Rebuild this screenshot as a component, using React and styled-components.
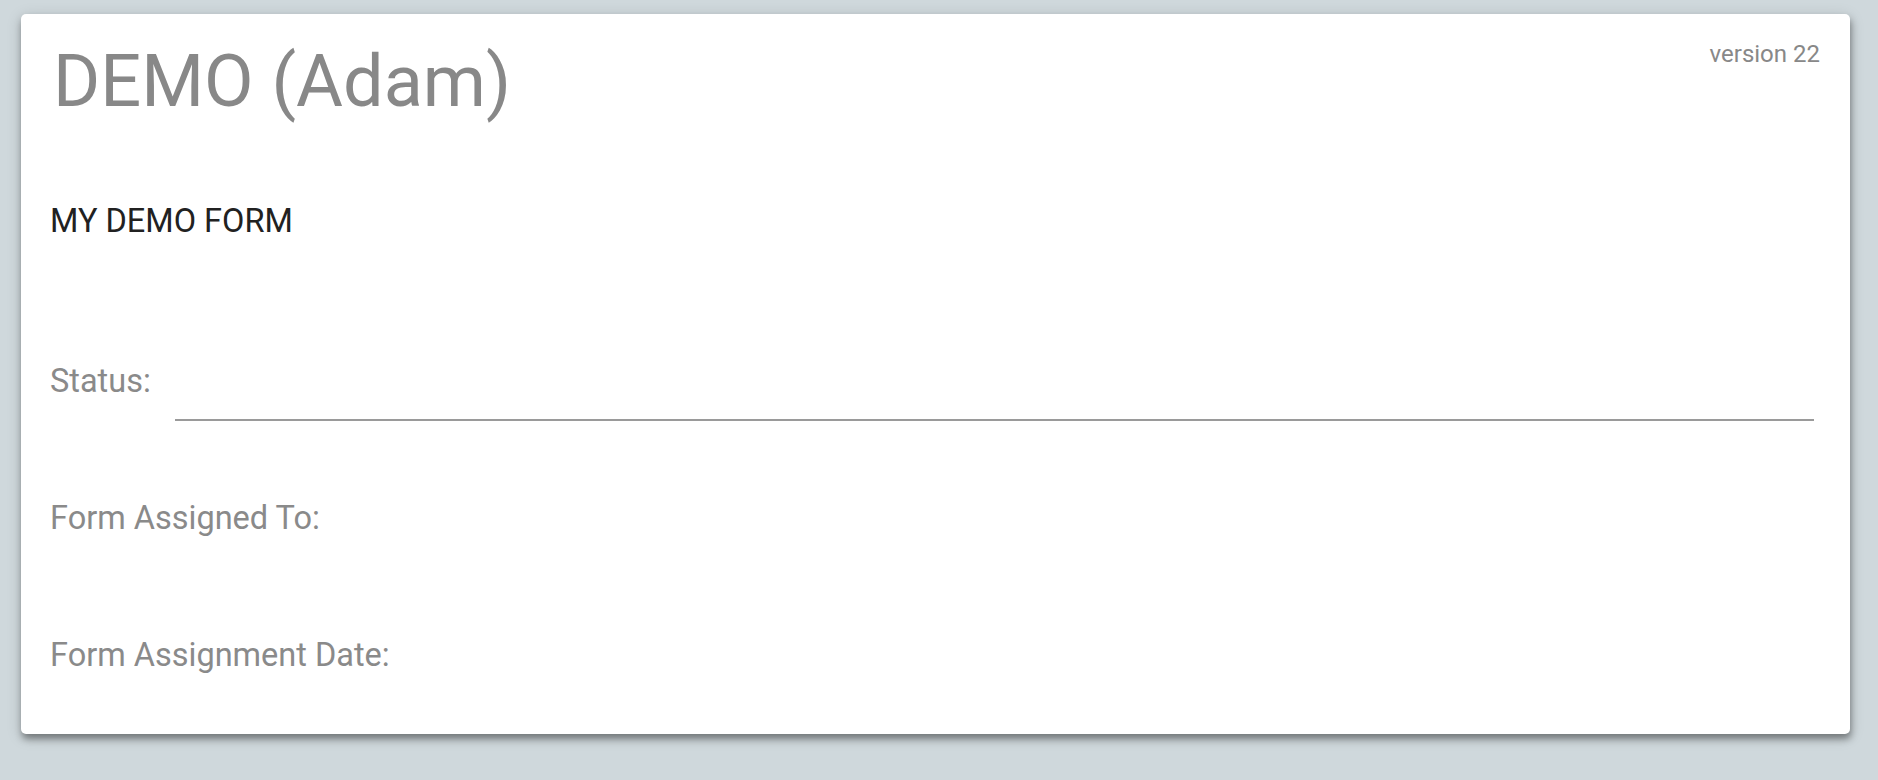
import React from 'react';
import styled, { createGlobalStyle } from 'styled-components';

const GlobalStyle = createGlobalStyle`
  html, body {
    margin: 0;
    padding: 0;
    background: #cfd8dc;
    font-family: Roboto, "Noto Sans", "Liberation Sans", sans-serif;
  }
`;

const Page = styled.div`
  padding: 14px 28px 40px 21px;
`;

const Card = styled.div`
  background: #fff;
  border-radius: 5px;
  padding: 30px 30px 63px 29px;
  box-shadow: 1px 5px 7px rgba(0, 0, 0, 0.38), 0 3px 16px rgba(0, 0, 0, 0.14);
`;

const Header = styled.div`
  display: flex;
  justify-content: space-between;
  align-items: flex-start;
`;

const Title = styled.h1`
  margin: 2px 0 0 3px;
  font-size: 72px;
  line-height: 72px;
  font-weight: 400;
  color: #888;
`;

const Version = styled.span`
  margin-top: -1px;
  font-size: 24px;
  line-height: 23px;
  color: #888;
`;

const FormName = styled.h2`
  margin: 87px 0 0 0;
  font-size: 32.5px;
  line-height: 32px;
  font-weight: 400;
  color: #212121;
`;

const Fields = styled.div`
  margin-top: 128px;
  display: flex;
  flex-direction: column;
`;

const Field = styled.div`
  display: flex;
  align-items: flex-start;
  min-height: 137px;

  &:last-child {
    min-height: 0;
  }
`;

const Label = styled.label`
  font-size: 32.5px;
  line-height: 32px;
  color: #8a8a8a;
  white-space: nowrap;
`;

const Input = styled.div`
  flex: 1;
  height: 54px;
  margin-left: 24px;
  margin-right: 6px;
  border-bottom: 2px solid #9a9a9a;
`;

const fields = [
  { label: 'Status:', input: true },
  { label: 'Form Assigned To:', input: false },
  { label: 'Form Assignment Date:', input: false },
];

export default function App() {
  return (
    <Page>
      <GlobalStyle />
      <Card>
        <Header>
          <Title>DEMO (Adam)</Title>
          <Version>version 22</Version>
        </Header>
        <FormName>MY DEMO FORM</FormName>
        <Fields>
          {fields.map((f) => (
            <Field key={f.label}>
              <Label>{f.label}</Label>
              {f.input && <Input />}
            </Field>
          ))}
        </Fields>
      </Card>
    </Page>
  );
}
